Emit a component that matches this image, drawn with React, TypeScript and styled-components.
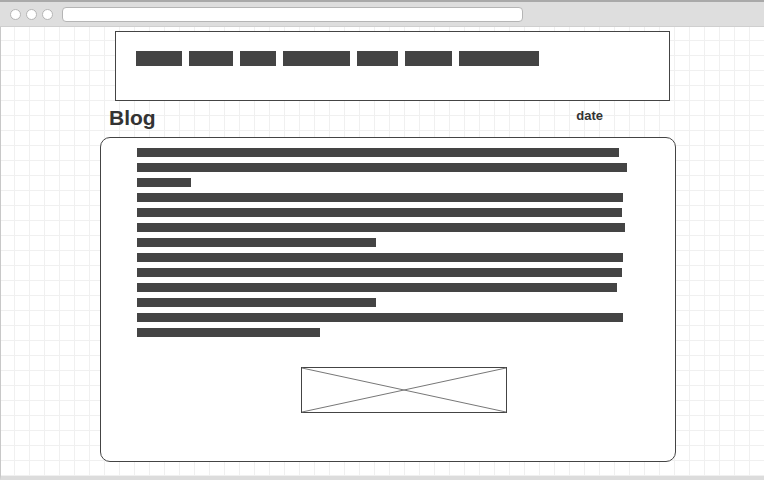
import { FC } from "react";
import styled, { createGlobalStyle } from "styled-components";

const navItems = [46, 44, 36, 67, 41, 47, 80];
const lines = [482, 490, 54, 486, 485, 488, 239, 486, 485, 480, 239, 486, 183];

const App: FC = () => {
  return (
    <>
      <GlobalStyle />
      <Window>
        <Chrome>
          <Dots>
            <Dot />
            <Dot />
            <Dot />
          </Dots>
          <AddressBar />
        </Chrome>

        <Canvas>
          <NavBox>
            {navItems.map((w, i) => (
              <NavItem key={i} $w={w} />
            ))}
          </NavBox>

          <HeadRow>
            <Title>Blog</Title>
            <DateLabel>date</DateLabel>
          </HeadRow>

          <Card>
            {lines.map((w, i) => (
              <TextLine key={i} $w={w} />
            ))}
            <ImagePlaceholder>
              <svg width="206" height="46" viewBox="0 0 206 46">
                <rect x="0.5" y="0.5" width="205" height="45" fill="#fff" stroke="#444" />
                <line x1="1" y1="1" x2="205" y2="45" stroke="#777" strokeWidth="1" />
                <line x1="1" y1="45" x2="205" y2="1" stroke="#777" strokeWidth="1" />
              </svg>
            </ImagePlaceholder>
          </Card>
        </Canvas>
      </Window>
    </>
  );
};

export default App;

const GlobalStyle = createGlobalStyle`
  html, body {
    margin: 0;
    padding: 0;
    background: #fff;
  }
  body {
    font-family: "Liberation Sans", Arial, sans-serif;
  }
`;

const Window = styled.div`
  width: 764px;
  height: 480px;
  display: flex;
  flex-direction: column;
  overflow: hidden;
`;

const Chrome = styled.div`
  height: 27px;
  box-sizing: border-box;
  background: #dedede;
  border-top: 2px solid #a9a9a9;
  border-bottom: 1px solid #cfcfcf;
  display: flex;
  align-items: center;
  padding-left: 10px;
  gap: 9px;
`;

const Dots = styled.div`
  display: flex;
  gap: 5px;
`;

const Dot = styled.span`
  width: 11px;
  height: 11px;
  box-sizing: border-box;
  border-radius: 50%;
  background: #fff;
  border: 1px solid #b5b5b5;
`;

const AddressBar = styled.div`
  width: 461px;
  height: 15px;
  box-sizing: border-box;
  background: #fff;
  border: 1px solid #b5b5b5;
  border-radius: 4px;
`;

const Canvas = styled.div`
  flex: 1;
  display: flex;
  flex-direction: column;
  align-items: flex-start;
  padding-top: 4px;
  border-left: 1px solid #c8c8c8;
  border-bottom: 4px solid #dcdcdc;
  background-color: #fff;
  background-image: linear-gradient(to right, #f0f0f0 1px, transparent 1px),
    linear-gradient(to bottom, #f0f0f0 1px, transparent 1px);
  background-size: 15px 15px;
  background-position: 13px 13px;
`;

const NavBox = styled.div`
  margin-left: 114px;
  width: 555px;
  height: 70px;
  box-sizing: border-box;
  border: 1px solid #444;
  background: #fff;
  display: flex;
  gap: 7px;
  padding: 19px 0 0 20px;
`;

const NavItem = styled.div<{ $w: number }>`
  width: ${(p) => p.$w}px;
  height: 15px;
  background: #444;
`;

const HeadRow = styled.div`
  margin: 5px 0 0 108px;
  width: 494px;
  display: flex;
  justify-content: space-between;
  align-items: flex-start;
`;

const Title = styled.h1`
  margin: 0;
  font-size: 21px;
  line-height: 24px;
  font-weight: bold;
  color: #333;
`;

const DateLabel = styled.span`
  margin-top: 2px;
  font-size: 13px;
  line-height: 16px;
  font-weight: bold;
  color: #333;
`;

const Card = styled.div`
  margin: 7px 0 0 99px;
  width: 576px;
  height: 325px;
  box-sizing: border-box;
  border: 1px solid #444;
  border-radius: 10px;
  background: #fff;
  padding: 10px 0 0 36px;
  display: flex;
  flex-direction: column;
  align-items: flex-start;
`;

const TextLine = styled.div<{ $w: number }>`
  width: ${(p) => p.$w}px;
  height: 9px;
  margin-bottom: 6px;
  background: #444;
`;

const ImagePlaceholder = styled.div`
  margin: 24px 0 0 164px;
  width: 206px;
  height: 46px;
  svg {
    display: block;
  }
`;
